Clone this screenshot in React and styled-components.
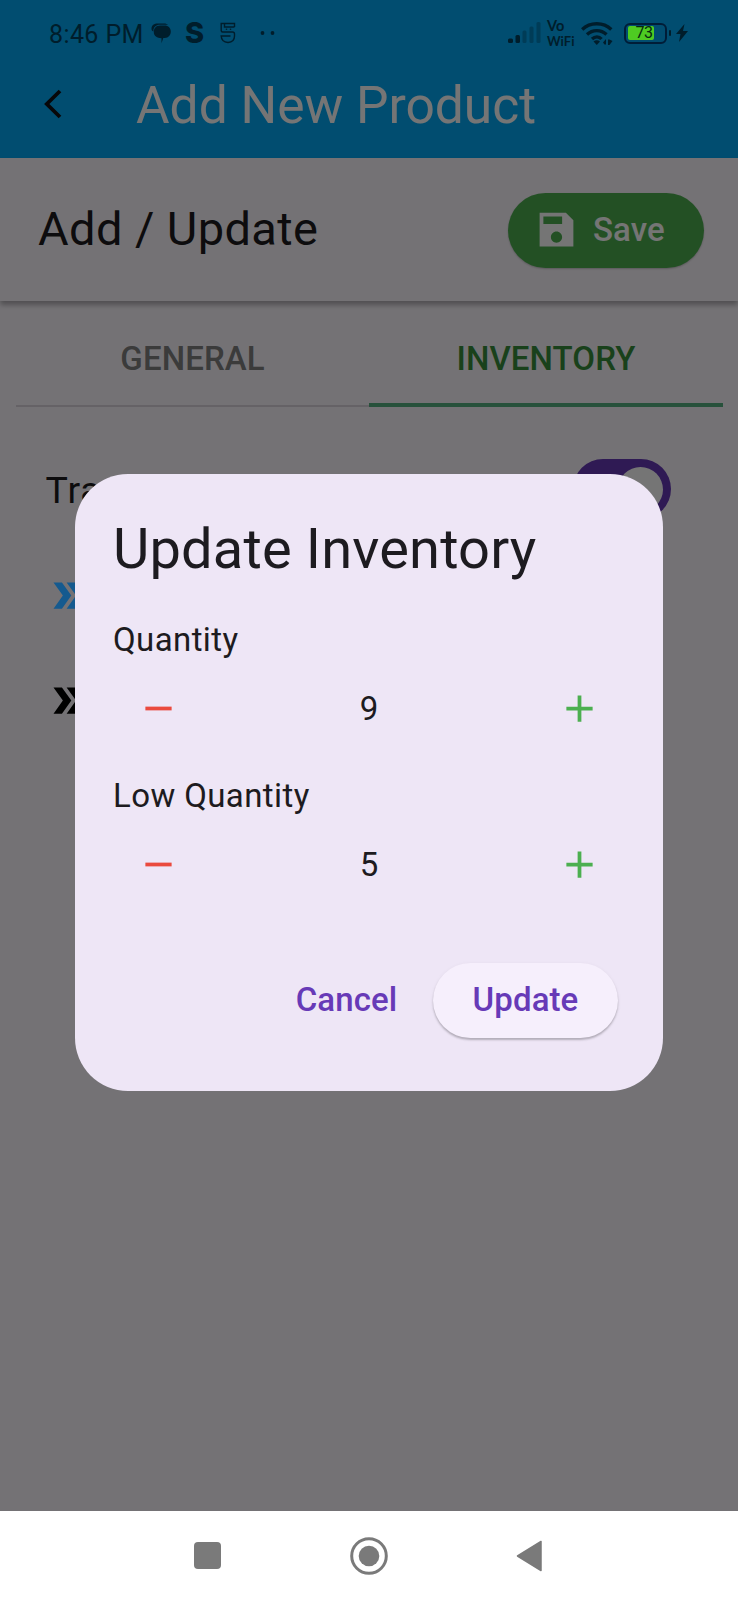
import React from "react";
import styled, { createGlobalStyle } from "styled-components";

const GlobalStyle = createGlobalStyle`
  * { box-sizing: border-box; }
  body { margin: 0; background: #ffffff; font-family: Roboto, "Liberation Sans", sans-serif; }
  button { font-family: inherit; border: 0; padding: 0; background: none; }
`;

const Phone = styled.div`
  position: relative;
  width: 738px;
  height: 1600px;
  display: flex;
  flex-direction: column;
  overflow: hidden;
  color: #1d1b20;
`;

const Screen = styled.main`
  flex: 1;
  display: flex;
  flex-direction: column;
  background: #fdf9ff;
`;

const Header = styled.header`
  height: 158px;
  flex: none;
  background: #03a9f4;
`;

const StatusBar = styled.div`
  position: relative;
  z-index: 3;
  height: 54px;
  padding: 12px 50px 0 49px;
  display: flex;
  justify-content: space-between;
  color: #001d2b;
`;

const StatusGroup = styled.div`
  display: flex;
  align-items: center;
  height: 42px;
`;

const Clock = styled.span`
  width: 102px;
  padding-top: 3px;
  font-size: 25px;
  line-height: 42px;
  letter-spacing: 0.4px;
  white-space: nowrap;
`;

const CallType = styled.span`
  display: flex;
  flex-direction: column;
  width: 32px;
  margin-left: 3px;
  font: 700 13px/15px Lato, sans-serif;
`;

const CallTypeTop = styled.span`
  font-size: 14.5px;
  line-height: 16px;
`;

const TitleBar = styled.div`
  height: 104px;
  display: flex;
  align-items: center;
  padding-left: 44px;
`;

const BackButton = styled.button`
  display: flex;
  margin-bottom: 4px;
`;

const PageTitle = styled.h1`
  margin: 0 0 0 74px;
  font-size: 51.5px;
  font-weight: 400;
  line-height: 60px;
  color: #ffffff;
  white-space: nowrap;
`;

const SubHeader = styled.section`
  position: relative;
  height: 143px;
  flex: none;
  display: flex;
  align-items: center;
  justify-content: space-between;
  padding: 2px 34px 0 38px;
  background: #fdf9ff;
  box-shadow: 0 4px 5px rgba(0, 0, 0, 0.3);
`;

const SubTitle = styled.h2`
  margin: 0 0 3px;
  font-size: 47px;
  font-weight: 400;
  line-height: 56px;
  letter-spacing: 0.4px;
`;

const SaveButton = styled.button`
  width: 196px;
  height: 75px;
  display: flex;
  align-items: center;
  padding: 0 0 2px 26px;
  gap: 14px;
  border-radius: 38px;
  background: #4caf50;
  box-shadow: 0 1px 2px rgba(0, 0, 0, 0.22);
  color: #ffffff;
  font-size: 33px;
  font-weight: 500;
  letter-spacing: 0.1px;
`;

const Tabs = styled.nav`
  display: grid;
  grid-template-columns: 353px 354px;
  flex: none;
  height: 106px;
  padding: 10px 15px 0 16px;
`;

const Tab = styled.button`
  padding-top: ${(p) => (p.$active ? 2 : 0)}px;
  font-size: 33px;
  font-weight: 500;
  letter-spacing: 0.1px;
  color: ${(p) => (p.$active ? "#388e3c" : "#808080")};
  border-bottom: ${(p) => (p.$active ? "4px solid #55b080" : "2px solid #dcd6de")};
`;

const Options = styled.section`
  display: flex;
  flex-direction: column;
  padding: 52px 67.5px 0 45.5px;
`;

const OptionRow = styled.div`
  display: flex;
  align-items: center;
  justify-content: space-between;
  height: 60px;
  margin-bottom: ${(p) => p.$gap || 0}px;
`;

const OptionLabel = styled.span`
  padding-top: 2px;
  font-size: 37.5px;
  letter-spacing: 0.9px;
`;

const Switch = styled.span`
  width: 98px;
  height: 60px;
  padding: 7.5px;
  display: flex;
  justify-content: flex-end;
  border-radius: 30px;
  background: #673ab7;
`;

const Knob = styled.span`
  width: 45px;
  height: 45px;
  border-radius: 50%;
  background: #ffffff;
`;

const Scrim = styled.div`
  position: absolute;
  z-index: 1;
  inset: 0 0 89px;
  background: rgba(0, 0, 0, 0.54);
`;

const DialogLayer = styled.div`
  position: absolute;
  z-index: 3;
  inset: 0 0 89px;
  display: flex;
  justify-content: center;
  align-items: flex-start;
  padding-top: 474px;
  pointer-events: none;
`;

const Dialog = styled.section`
  width: 588px;
  height: 617px;
  padding: 38px 45px 0 38px;
  border-radius: 53px;
  background: #eee6f6;
  pointer-events: auto;
`;

const DialogTitle = styled.h2`
  margin: 0 0 32px;
  font-size: 56px;
  font-weight: 400;
  line-height: 74px;
  letter-spacing: 0.16px;
  white-space: nowrap;
`;

const Field = styled.div`
  height: ${(p) => p.$height}px;
`;

const FieldLabel = styled.div`
  font-size: 33px;
  line-height: 44px;
  letter-spacing: 0.4px;
`;

const Stepper = styled.div`
  display: flex;
  justify-content: space-between;
  align-items: center;
  height: 90px;
  width: 512px;
  padding: 0 22.5px;
  margin-top: 1px;
`;

const StepButton = styled.button`
  display: flex;
  color: ${(p) => p.$color};
`;

const Value = styled.span`
  padding-top: 1px;
  font-size: 33px;
  line-height: 44px;
`;

const Actions = styled.div`
  display: flex;
  justify-content: flex-end;
  align-items: flex-start;
  gap: 15px;
`;

const ActionButton = styled.button`
  width: ${(p) => p.$width}px;
  height: 75px;
  border-radius: 38px;
  padding-bottom: 2px;
  font-size: 33px;
  font-weight: 500;
  letter-spacing: 0.1px;
  color: #673ab7;
  background: ${(p) => (p.$raised ? "#f6effc" : "transparent")};
  box-shadow: ${(p) => (p.$raised ? "0 2px 2px rgba(0,0,0,.22), 0 1px 4px rgba(0,0,0,.06)" : "none")};
`;

const SystemNav = styled.nav`
  flex: none;
  height: 89px;
  display: flex;
  align-items: center;
  justify-content: space-between;
  padding: 0 195px 0 193px;
  background: #ffffff;
`;

const Icon = styled.svg`
  display: block;
  flex: none;
  margin-left: ${(p) => p.$left || 0}px;
`;

const ArrowIcon = styled(Icon)`
  position: relative;
  z-index: 2;
`;

const DoubleArrow = ({ color }) => (
  <ArrowIcon width="45" height="45" viewBox="0 0 24 24" fill={color}>
    <path d="M15.5 5H11l5 7-5 7h4.5l5-7z" />
    <path d="M8.5 5H4l5 7-5 7h4.5l5-7z" />
  </ArrowIcon>
);

const StepIcon = ({ plus }) => (
  <Icon width="45" height="45" viewBox="0 0 24 24" fill="currentColor">
    <path d={plus ? "M19 13h-6v6h-2v-6H5v-2h6V5h2v6h6v2z" : "M19 13H5v-2h14v2z"} />
  </Icon>
);

const NotificationS = styled.span`
  width: 20px;
  margin-left: 14px;
  font: 800 29px/42px Inter, sans-serif;
`;

const Notifications = () => (
  <>
    <Icon width="20" height="26" viewBox="0 0 20 26" fill="currentColor">
      <path d="M.5 9C.5 5 3 3.500 7 3.500h6c2 0 3 .6 4 1.300H9C5 4.800 2.400 7 2.400 11.500c-1.200-.3-1.900-1.500-1.900-2.500z" />
      <path d="M2.800 12C2.800 8.200 5 5.400 9 5.400h4.500c4 0 6.300 2.600 6.300 6.200s-2.300 6.400-6 6.400h-1.500L10.500 23.300v-5.100C6 18 2.800 16 2.800 12z" />
    </Icon>
    <NotificationS>S</NotificationS>
    <Icon width="16" height="22" viewBox="0 0 16 22" $left={15}>
      <g fill="none" stroke="currentColor" strokeWidth="1.400">
        <path d="M14.500 5V1.500H1.200V8.500q0 1.500 1.500 1.500H12.500q2 0 2 2V14q0 6-6.500 6.500Q1.500 20 1.200 14H5" />
        <path d="M14.500 5H4.500V1.500M5 14H10.500" />
      </g>
      <circle cx="6.500" cy="7.300" r=".8" fill="currentColor" />
      <circle cx="10.500" cy="7.300" r=".8" fill="currentColor" />
    </Icon>
    <Icon width="16" height="6" viewBox="0 0 16 6" $left={23.5} fill="currentColor">
      <circle cx="2.500" cy="3" r="1.900" />
      <circle cx="12.500" cy="3" r="1.900" />
    </Icon>
  </>
);

const Signal = () => (
  <Icon width="36" height="24" viewBox="0 0 36 24" fill="currentColor">
    <rect x="0" y="17.500" width="5" height="4.500" rx="1.500" />
    <rect x="7.500" y="14" width="4.500" height="8" rx="1.500" />
    <g opacity="0.35">
      <rect x="14.500" y="9.500" width="4" height="12.500" rx="1.500" />
      <rect x="21.500" y="5.500" width="4" height="16.500" rx="1.500" />
      <rect x="28.500" y="1" width="4" height="21" rx="1.500" />
    </g>
  </Icon>
);

const Wifi = () => (
  <Icon width="32" height="25" viewBox="0 0 32 25" $left={2}>
    <g fill="none" stroke="currentColor" strokeWidth="3.300">
      <path d="M1.200 8.500C9 .8 22.500 .8 30.300 8.500" />
      <path d="M6 13.500c5.500-5.300 14-5.300 19.500 0" />
      <path d="M11 18c3-2.800 7-2.800 9.500 0" />
    </g>
    <path d="M12.500 20.500c2-1.800 4.500-1.800 6.500 0L15.800 24z" fill="currentColor" />
    <path d="M22 21.500l3-3.500v5.500h-1.500zM27 18.500h1.500l3 1.500-3 4H27z" fill="currentColor" />
  </Icon>
);

const BatteryFrame = styled.span`
  display: flex;
  align-items: center;
  width: 43px;
  height: 21px;
  margin-left: 10.5px;
  padding: 1.5px 2px;
  border: 2.5px solid #001d38;
  border-radius: 6px;
`;

const BatteryLevel = styled.span`
  width: 26px;
  height: 14px;
  padding-left: 8px;
  border-radius: 2px;
  background: #4ecb22;
  color: #06280f;
  font-size: 16px;
  line-height: 14px;
  letter-spacing: -0.5px;
`;

const BatteryTip = styled.span`
  width: 2.5px;
  height: 6px;
  margin-left: 2px;
  border-radius: 1px;
  background: currentColor;
`;

const Quantity = ({ label, value, height }) => (
  <Field $height={height}>
    <FieldLabel>{label}</FieldLabel>
    <Stepper>
      <StepButton $color="#ea4a3e"><StepIcon /></StepButton>
      <Value>{value}</Value>
      <StepButton $color="#4caf50"><StepIcon plus /></StepButton>
    </Stepper>
  </Field>
);

export default function App() {
  return (
    <Phone>
      <GlobalStyle />
      <Screen>
        <Header>
          <StatusBar>
            <StatusGroup>
              <Clock>8:46 PM</Clock>
              <Notifications />
            </StatusGroup>
            <StatusGroup>
              <Signal />
              <CallType>
                <CallTypeTop>Vo</CallTypeTop>
                <span>WiFi</span>
              </CallType>
              <Wifi />
              <BatteryFrame>
                <BatteryLevel>73</BatteryLevel>
              </BatteryFrame>
              <BatteryTip />
              <Icon width="12" height="18" viewBox="0 0 12 18" $left={5} fill="currentColor">
                <path d="M8.500 0L0 10h4.500L3 18l9-11H7z" />
              </Icon>
            </StatusGroup>
          </StatusBar>
          <TitleBar>
            <BackButton>
              <Icon width="18" height="30" viewBox="0 0 18 30" fill="none" stroke="#111014" strokeWidth="3.800">
                <path d="M16 2L2.800 15L16 28" />
              </Icon>
            </BackButton>
            <PageTitle>Add New Product</PageTitle>
          </TitleBar>
        </Header>
        <SubHeader>
          <SubTitle>Add / Update</SubTitle>
          <SaveButton>
            <Icon width="45" height="45" viewBox="0 0 24 24" fill="currentColor">
              <path
                fillRule="evenodd"
                d="M17 3H3v18h18V7zM12 19c-1.660 0-3-1.340-3-3s1.340-3 3-3 3 1.340 3 3-1.340 3-3 3zM15 9H5V5h10z"
              />
            </Icon>
            Save
          </SaveButton>
        </SubHeader>
        <Tabs>
          <Tab>GENERAL</Tab>
          <Tab $active>INVENTORY</Tab>
        </Tabs>
        <Options>
          <OptionRow $gap={46}>
            <OptionLabel>Track</OptionLabel>
            <Switch><Knob /></Switch>
          </OptionRow>
          <OptionRow $gap={45}><DoubleArrow color="#155a8f" /></OptionRow>
          <OptionRow><DoubleArrow color="#000000" /></OptionRow>
        </Options>
      </Screen>
      <Scrim />
      <DialogLayer>
        <Dialog>
          <DialogTitle>Update Inventory</DialogTitle>
          <Quantity label="Quantity" value={9} height={156} />
          <Quantity label="Low Quantity" value={5} height={189} />
          <Actions>
            <ActionButton $width={143}>Cancel</ActionButton>
            <ActionButton $raised $width={185}>Update</ActionButton>
          </Actions>
        </Dialog>
      </DialogLayer>
      <SystemNav>
        <Icon width="29" height="29" viewBox="0 0 29 29">
          <rect x="1" y="1" width="27" height="27" rx="4" fill="#7a7a7a" />
        </Icon>
        <Icon width="38" height="38" viewBox="0 0 38 38">
          <circle cx="19" cy="19" r="17.300" fill="none" stroke="#7a7a7a" strokeWidth="3" />
          <circle cx="19" cy="19" r="10.300" fill="#7a7a7a" />
        </Icon>
        <Icon width="27" height="32" viewBox="0 0 27 32">
          <path d="M25 1.500v29L1.500 16z" fill="#7a7a7a" stroke="#7a7a7a" strokeWidth="1.500" strokeLinejoin="round" />
        </Icon>
      </SystemNav>
    </Phone>
  );
}
